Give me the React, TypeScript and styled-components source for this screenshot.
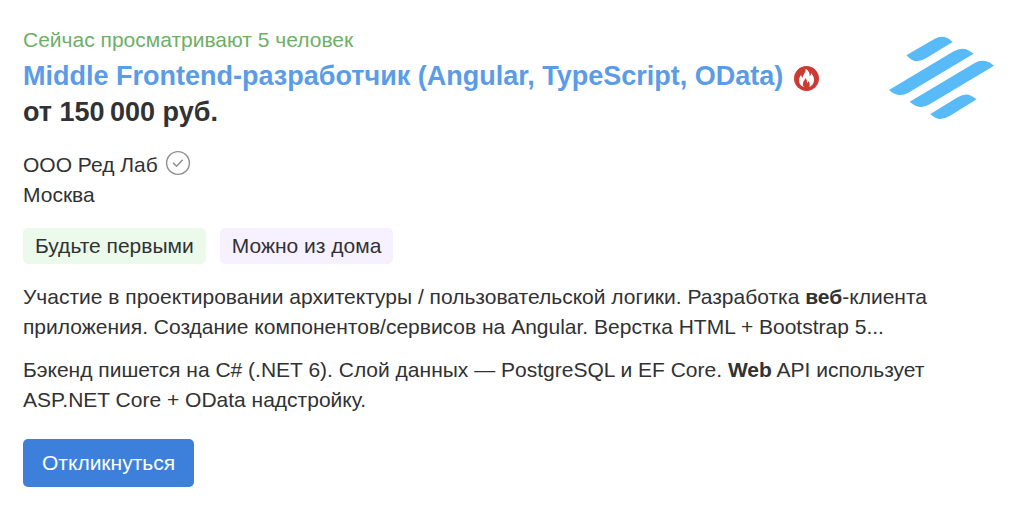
import React from "react";
import styled, { createGlobalStyle } from "styled-components";

const GlobalStyle = createGlobalStyle`
  *, *::before, *::after { box-sizing: border-box; }
  body {
    margin: 0;
    background: #fff;
    color: #303233;
    font-family: "Liberation Sans", Arial, sans-serif;
    font-size: 21px;
    line-height: 30px;
  }
`;

const Page = styled.main`
  padding: 25px 30px 27px 23px;
`;

const Header = styled.header`
  display: flex;
  align-items: flex-start;
  justify-content: space-between;
  gap: 24px;
`;

const Heading = styled.div`
  flex: 1;
  min-width: 0;
`;

const Viewers = styled.p`
  margin: 0;
  color: #6cb066;
`;

const TitleRow = styled.div`
  display: flex;
  align-items: center;
  gap: 11px;
  margin-top: 3px;
`;

const Title = styled.h2`
  margin: 0;
  font-size: 27px;
  line-height: 36px;
`;

const TitleLink = styled.a`
  color: #5a9ce8;
  text-decoration: none;
`;

const HotBadge = styled.span`
  display: flex;
  padding-top: 4px;
`;

const Salary = styled.p`
  margin: 0;
  font-size: 27px;
  font-weight: 700;
  line-height: 36px;
`;

const LogoLink = styled.a`
  display: flex;
  padding-top: 11px;
`;

const Employer = styled.div`
  margin-top: 20px;
`;

const Company = styled.div`
  display: flex;
  align-items: flex-start;
  gap: 7px;
`;

const Tags = styled.ul`
  display: flex;
  flex-wrap: wrap;
  gap: 14px;
  margin: 18px 0;
  padding: 0;
  list-style: none;
`;

const Tag = styled.li<{ $tone: "green" | "violet" }>`
  padding: 3px 12px;
  border-radius: 5px;
  background: ${({ $tone }) => ($tone === "green" ? "#ebfaeb" : "#f7f0fe")};
`;

const Description = styled.p`
  max-width: 920px;
  margin: 0 0 13px;
`;

const ApplyButton = styled.button`
  height: 48px;
  margin-top: 11px;
  padding: 0 19px;
  border: 0;
  border-radius: 5px;
  background: #3d80dc;
  color: #fff;
  font: inherit;
  cursor: pointer;
`;

const FireIcon = () => (
  <svg width="25" height="25" viewBox="0 0 24 24" role="img" aria-label="Срочная вакансия">
    <circle cx="12" cy="12" r="12" fill="#cc3a35" />
    <path
      fill="#fff"
      d="M11.200 2.600C14.400 4.500 15.400 7.200 14.900 9.800C15.900 9.200 16.300 8.200 16.300 6.600C18.600 9 19.500 11.400 19.200 14C18.900 17 17.200 19.300 14.600 20.200C15.600 18 15.200 15.900 13.900 14.300C13.800 15.400 13.300 16 12.500 16.300C12.700 14.200 12.100 12.500 10.700 11.500C10.700 13.600 8.500 14.800 8.500 17.200C8.500 18.400 8.900 19.400 9.700 20.200C6.900 19.400 5.200 17.300 4.900 14.600C4.700 12.200 5.600 10.200 6.700 8.500C6.900 9.900 7.500 10.800 8.400 11.200C8.300 7.800 11.600 6.600 11.200 2.600Z"
    />
  </svg>
);

const VerifiedIcon = () => (
  <svg width="26" height="26" viewBox="0 0 26 26" fill="none" stroke="#8d8f91" role="img" aria-label="Проверенная компания">
    <circle cx="13" cy="13" r="11.4" strokeWidth="1.4" />
    <path d="M8 12.8l3.600 3.500 6.100-6.500" strokeWidth="1.5" />
  </svg>
);

const CompanyLogo = () => (
  <svg width="105" height="84" viewBox="27 18 315 252" fill="#58bbf8" role="img" aria-label="Ред Лаб">
    <path d="M79 76L163 27Q182 16 197 22Q207 25 218 36L138 85Q120 96 104 93Q94 91 79 76Z" />
    <path d="M27 180L221 64Q239 53 256 57Q267 60 281 71L85 188Q68 198 52 194Q41 192 27 180Z" />
    <path d="M89 215L284 99Q302 88 319 94Q330 97 342 107L149 223Q131 234 116 230Q105 228 89 215Z" />
    <path d="M151 252L233 202Q250 191 266 194Q277 197 290 208L209 258Q193 268 177 267Q166 265 151 252Z" />
  </svg>
);

export default function App() {
  return (
    <>
      <GlobalStyle />
      <Page>
        <article>
          <Header>
            <Heading>
              <Viewers>Сейчас просматривают 5 человек</Viewers>
              <TitleRow>
                <Title>
                  <TitleLink href="#vacancy">Middle Frontend-разработчик (Angular, TypeScript, OData)</TitleLink>
                </Title>
                <HotBadge>
                  <FireIcon />
                </HotBadge>
              </TitleRow>
              <Salary>от 150{"\u202f"}000 руб.</Salary>
            </Heading>
            <LogoLink href="#company">
              <CompanyLogo />
            </LogoLink>
          </Header>
          <Employer>
            <Company>
              ООО Ред Лаб
              <VerifiedIcon />
            </Company>
            <div>Москва</div>
          </Employer>
          <Tags>
            <Tag $tone="green">Будьте первыми</Tag>
            <Tag $tone="violet">Можно из дома</Tag>
          </Tags>
          <Description>
            Участие в проектировании архитектуры / пользовательской логики. Разработка <b>веб</b>-клиента
            приложения. Создание компонентов/сервисов на Angular. Верстка HTML + Bootstrap 5...
          </Description>
          <Description>
            Бэкенд пишется на C# (.NET 6). Слой данных — PostgreSQL и EF Core. <b>Web</b> API использует
            ASP.NET Core + OData надстройку.
          </Description>
          <ApplyButton type="button">Откликнуться</ApplyButton>
        </article>
      </Page>
    </>
  );
}
